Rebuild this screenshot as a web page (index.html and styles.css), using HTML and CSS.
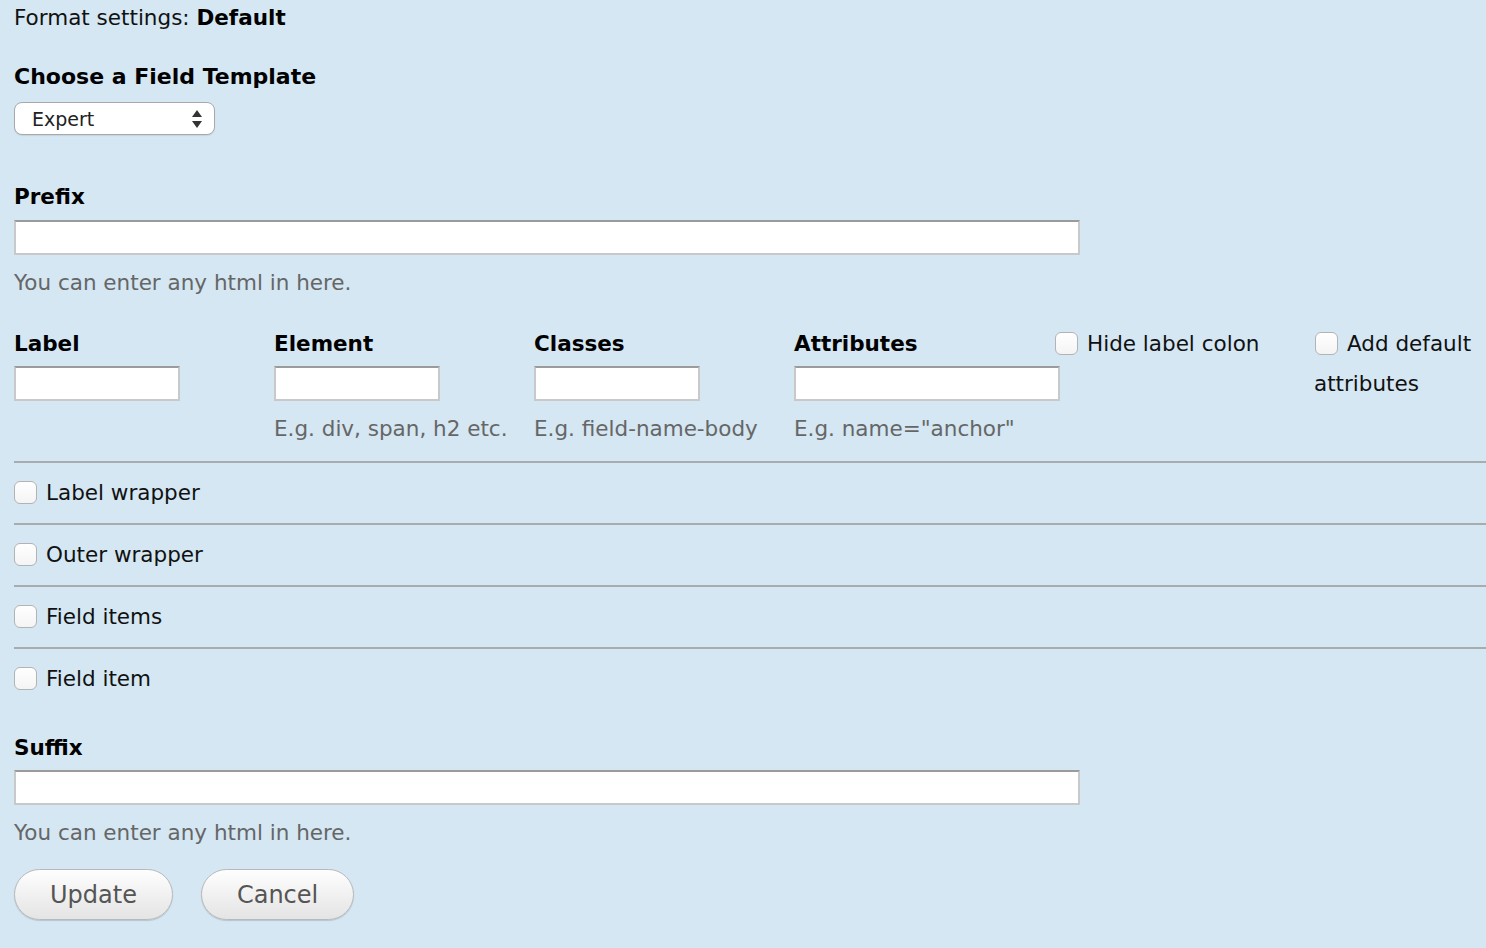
FILE: index.html
```html
<!DOCTYPE html>
<html>
<head>
<meta charset="utf-8">
<link rel="stylesheet" href="styles.css">
</head>
<body>
<form class="page">
  <p class="format">Format settings: <strong>Default</strong></p>

  <h2 class="heading">Choose a Field Template</h2>
  <span class="select-wrap">
    <select class="select"><option>Expert</option></select>
    <svg class="select-arrows" width="12" height="20" viewBox="0 0 12 20"><path d="M6 1 L11 8 L1 8 Z" fill="#333"/><path d="M6 19 L11 12 L1 12 Z" fill="#333"/></svg>
  </span>

  <label class="field-label prefix-label">Prefix</label>
  <input class="text wide prefix-input" type="text">
  <p class="help">You can enter any html in here.</p>

  <div class="fields">
    <div class="col">
      <label class="col-label">Label</label>
      <input class="text small" type="text">
    </div>
    <div class="col">
      <label class="col-label">Element</label>
      <input class="text small" type="text">
      <p class="help">E.g. div, span, h2 etc.</p>
    </div>
    <div class="col">
      <label class="col-label">Classes</label>
      <input class="text small" type="text">
      <p class="help">E.g. field-name-body</p>
    </div>
    <div class="col">
      <label class="col-label">Attributes</label>
      <input class="text medium" type="text">
      <p class="help">E.g. name="anchor"</p>
    </div>
    <div class="col">
      <label class="check-label"><input class="check" type="checkbox">Hide label colon</label>
    </div>
    <div class="col">
      <label class="check-label"><input class="check" type="checkbox">Add default attributes</label>
    </div>
  </div>

  <div class="wrappers">
    <div class="wrap-row"><label class="check-label"><input class="check" type="checkbox">Label wrapper</label></div>
    <div class="wrap-row"><label class="check-label"><input class="check" type="checkbox">Outer wrapper</label></div>
    <div class="wrap-row"><label class="check-label"><input class="check" type="checkbox">Field items</label></div>
    <div class="wrap-row last"><label class="check-label"><input class="check" type="checkbox">Field item</label></div>
  </div>

  <label class="field-label suffix-label">Suffix</label>
  <input class="text wide suffix-input" type="text">
  <p class="help">You can enter any html in here.</p>

  <div class="actions">
    <button type="button" class="btn">Update</button>
    <button type="button" class="btn">Cancel</button>
  </div>
</form>
</body>
</html>
```

FILE: styles.css
```css
html, body {
  margin: 0;
  padding: 0;
  background: #d4e7f3;
}
body {
  font-family: "DejaVu Sans", Verdana, sans-serif;
  font-size: 21.5px;
  color: #111;
}
.page {
  display: flex;
  flex-direction: column;
  align-items: flex-start;
  padding: 1px 0 28px 14px;
}
.format {
  margin: 0;
  line-height: 34px;
}
.format strong {
  font-weight: bold;
  color: #000;
}
.heading {
  margin: 25px 0 0;
  font-size: 22px;
  line-height: 34px;
  font-weight: bold;
  color: #000;
}
.select-wrap {
  position: relative;
  display: inline-block;
  margin-top: 8px;
}
.select {
  appearance: none;
  -webkit-appearance: none;
  width: 201px;
  height: 33px;
  border: 1px solid #a9a9a9;
  border-radius: 8px;
  background: #fff;
  font-family: "DejaVu Sans", Verdana, sans-serif;
  font-size: 19px;
  color: #222;
  padding: 0 0 0 17px;
  box-shadow: 0 1px 1px rgba(0,0,0,0.08);
}
.select-arrows {
  position: absolute;
  right: 12px;
  top: 7px;
  pointer-events: none;
}
.field-label {
  font-weight: bold;
  color: #000;
  line-height: 34px;
}
.prefix-label {
  margin-top: 45px;
}
.suffix-label {
  margin-top: 22px;
}
.text {
  box-sizing: border-box;
  height: 35px;
  margin: 0;
  background: #fff;
  border: 2px solid #c9c9c9;
  border-top-color: #9b9b9b;
  padding: 0 4px;
  font-family: inherit;
  font-size: 19px;
}
.prefix-input { margin-top: 6px; }
.suffix-input { margin-top: 5px; }
.wide { width: 1066px; }
.small { width: 166px; }
.medium { width: 266px; }
.help {
  margin: 11px 0 0;
  line-height: 34px;
  color: #666;
}
.fields {
  display: grid;
  grid-template-columns: 260px 260px 260px 260px 260px 1fr;
  align-self: stretch;
  margin-top: 24px;
  padding-bottom: 15px;
  border-bottom: 2px solid #a8acaf;
}
.col {
  display: flex;
  flex-direction: column;
  align-items: flex-start;
}
.col-label {
  font-weight: bold;
  color: #000;
  line-height: 40px;
}
.col .text {
  margin-top: 2px;
}
.check-label {
  line-height: 40px;
  color: #111;
}
.check {
  appearance: none;
  -webkit-appearance: none;
  box-sizing: border-box;
  width: 23px;
  height: 23px;
  margin: 0 9px 0 1px;
  border: 1px solid #b3b3b3;
  border-radius: 6px;
  background: linear-gradient(#ffffff, #f4f4f4);
  vertical-align: -4px;
}
.wrappers {
  align-self: stretch;
  display: flex;
  flex-direction: column;
}
.wrap-row {
  height: 60px;
  display: flex;
  align-items: center;
  border-bottom: 2px solid #a8acaf;
}
.wrap-row .check {
  margin-left: 0;
}
.wrap-row.last {
  border-bottom: none;
}
.actions {
  display: flex;
  gap: 28px;
  margin-top: 19px;
}
.btn {
  height: 51px;
  padding: 0 35px;
  border: 1px solid #b9b9b9;
  border-radius: 26px;
  background: linear-gradient(#fefefe, #e4e4e4);
  box-shadow: 0 1px 1px rgba(0,0,0,0.15);
  font-family: "DejaVu Sans", Verdana, sans-serif;
  font-size: 24px;
  color: #555;
}
```
